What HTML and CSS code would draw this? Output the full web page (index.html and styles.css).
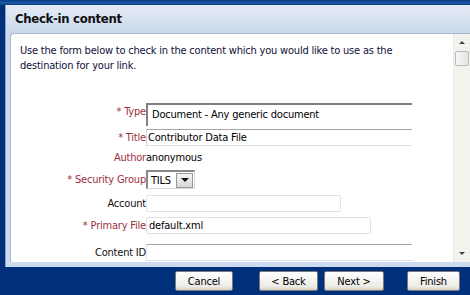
FILE: index.html
```html
<!DOCTYPE html>
<html lang="en">
<head>
    <meta charset="UTF-8">
    <title>Check-in content</title>
    <link rel="stylesheet" href="styles.css">
</head>
<body>
    <div class="topbar"></div>
    <div class="panel">
        <div class="panel-header">Check-in content</div>
        <div class="panel-body">
            <div class="scroll-area">
                <p class="intro">Use the form below to check in the content which you would like to use as the destination for your link.</p>

                <div class="form">
                    <div class="row row-type">
                        <label class="required"><span class="star">*</span> Type</label>
                        <div class="field field-type">Document - Any generic document</div>
                    </div>
                    <div class="row row-title">
                        <label class="required"><span class="star">*</span> Title</label>
                        <div class="field field-title">Contributor Data File</div>
                    </div>
                    <div class="row row-author">
                        <label class="required">Author</label>
                        <div class="value">anonymous</div>
                    </div>
                    <div class="row row-security">
                        <label class="required"><span class="star">*</span> Security Group</label>
                        <div class="select">
                            <span class="select-text">TILS</span>
                            <span class="select-btn"><span class="arrow"></span></span>
                        </div>
                    </div>
                    <div class="row row-account">
                        <label>Account</label>
                        <div class="field field-account"></div>
                    </div>
                    <div class="row row-primary">
                        <label class="required"><span class="star">*</span> Primary File</label>
                        <div class="field field-primary">default.xml</div>
                    </div>
                    <div class="row row-contentid">
                        <label>Content ID</label>
                        <div class="field field-contentid"></div>
                    </div>
                </div>
            </div>
            <div class="scrollbar">
                <div class="sb-up"></div>
                <div class="sb-thumb"></div>
                <div class="sb-track"></div>
                <div class="sb-down"></div>
            </div>
        </div>
    </div>
    <div class="footer">
        <button class="btn btn-cancel">Cancel</button>
        <button class="btn btn-back">&lt; Back</button>
        <button class="btn btn-next">Next &gt;</button>
        <button class="btn btn-finish">Finish</button>
    </div>
</body>
</html>
```

FILE: styles.css
```css
:root {
    --navy: #00307c;
    --panel-blue: #cddbee;
    --label-red: #9c2f3f;
    --text: #10103a;
}

* {
    margin: 0;
    padding: 0;
    box-sizing: border-box;
    font-family: 'DejaVu Sans Condensed', 'DejaVu Sans', sans-serif;
    letter-spacing: -0.2px;
}

body {
    background-color: var(--navy);
    width: 470px;
    height: 295px;
    overflow: hidden;
    font-size: 11px;
    color: var(--text);
}

.topbar {
    height: 5px;
    background: linear-gradient(to bottom, #0a3a86, #1d5aa8 60%, #0b3c85);
}

.panel {
    margin-left: 5px;
    height: 262px;
    background: linear-gradient(to bottom, #e4ebf5, #cad9ec 28px, var(--panel-blue));
    border-left: 1px solid #8aa4c8;
    padding-left: 4px;
}

.panel-header {
    height: 28px;
    padding-left: 5px;
    padding-top: 6px;
    font-size: 13px;
    font-weight: bold;
    letter-spacing: -0.3px;
    color: #101010;
}

.panel-body {
    display: flex;
    height: 229px;
    background-color: white;
    border-left: 1px solid #a7b6cc;
    border-top: 1px solid #a7b6cc;
    border-top-left-radius: 4px;
    overflow: hidden;
}

.scroll-area {
    flex: 1;
    padding: 9px 0 0 9px;
}

.intro {
    line-height: 15px;
    color: var(--text);
    width: 420px;
}

.form {
    margin-top: 30px;
}

.row {
    display: flex;
    align-items: center;
}

.row label {
    width: 126px;
    text-align: right;
    color: #101010;
    flex-shrink: 0;
}

.row label.required {
    color: var(--label-red);
}

.field {
    height: 17px;
    line-height: 15px;
    padding-left: 2px;
    border: 1px solid #dce2ea;
    border-top-color: #a5a5a5;
    color: #000;
}

.row-type label {
    align-self: flex-start;
    padding-top: 2px;
}

.field-type {
    width: 266px;
    height: 23px;
    line-height: 19px;
    border: 0;
    border-top: 2px solid #808080;
    border-left: 2px solid #808080;
    padding-left: 4px;
}

.row-title { margin-top: 3px; }
.field-title {
    width: 266px;
    border-left-color: #d0d5dc;
    border-right: 0;
    padding-left: 1px;
}

.row-author { margin-top: 5px; }
.value { color: #000; }

.row-security { margin-top: 6px; }
.select {
    display: flex;
    align-items: center;
    height: 19px;
    width: 49px;
    border: 1px solid #d8d8d8;
    border-left: 2px solid #888;
    border-top: 2px solid #888;
}

.select-text {
    flex: 1;
    padding-left: 3px;
    color: #000;
}

.select-btn {
    width: 17px;
    height: 15px;
    margin-right: 1px;
    border: 1px solid #999;
    background: linear-gradient(to bottom, #f4f4f4, #d8d8d8);
    display: flex;
    align-items: center;
    justify-content: center;
}

.arrow {
    width: 0;
    height: 0;
    border-left: 4px solid transparent;
    border-right: 4px solid transparent;
    border-top: 4px solid #111;
}

.row-account { margin-top: 6px; }
.field-account {
    width: 195px;
    border: 1px solid #dfe3e9;
    border-radius: 2px;
}

.row-primary { margin-top: 5px; }
.field-primary {
    width: 225px;
    border: 1px solid #dfe3e9;
    border-radius: 2px;
}

.row-contentid { margin-top: 10px; }
.field-contentid {
    width: 266px;
    border-right: 0;
}

.scrollbar {
    width: 17px;
    display: flex;
    flex-direction: column;
    background-color: #f3f2ec;
    border-left: 1px solid #ebebeb;
}

.sb-up,
.sb-down {
    height: 17px;
    display: flex;
    justify-content: center;
    align-items: center;
}

.sb-up::after {
    content: '';
    border-left: 3px solid transparent;
    border-right: 3px solid transparent;
    border-bottom: 3px solid #444;
}

.sb-down::after {
    content: '';
    border-left: 3px solid transparent;
    border-right: 3px solid transparent;
    border-top: 3px solid #444;
}

.sb-thumb {
    height: 15px;
    margin: 0 1px;
    border: 1px solid #b9b9b9;
    border-radius: 2px;
    background: linear-gradient(to right, #f7f7f7, #e4e4e4);
}

.sb-track {
    flex: 1;
}

.footer {
    display: flex;
    padding: 4px 0 0 175px;
}

.btn {
    height: 20px;
    font-size: 11px;
    color: #000;
    border: 1px solid #7a7a7a;
    border-radius: 2px;
    background: linear-gradient(to bottom, #ffffff, #ecebe6 80%, #d6d0c5);
}

.btn-cancel { width: 58px; }
.btn-back { width: 59px; margin-left: 26px; }
.btn-next { width: 60px; margin-left: 6px; }
.btn-finish { width: 53px; margin-left: 23px; }
```
